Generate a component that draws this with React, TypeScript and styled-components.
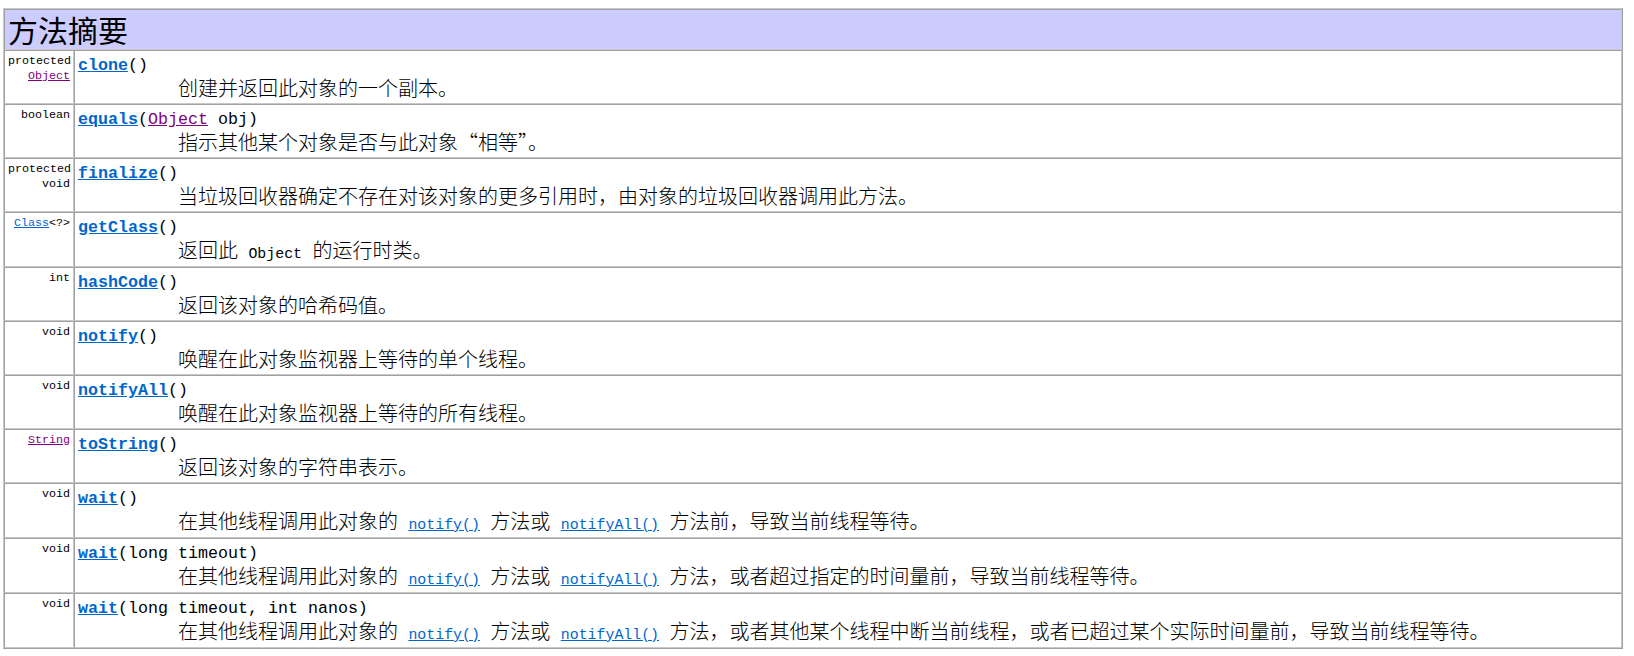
import React from "react";
import styled, { createGlobalStyle } from "styled-components";

const GlobalStyle = createGlobalStyle`
  html, body {
    margin: 0;
    padding: 0;
    background: #ffffff;
  }
  body {
    font-family: "Noto Sans CJK SC", "Liberation Sans", sans-serif;
    color: #000000;
  }
`;

const MONO = `"Liberation Mono", "DejaVu Sans Mono", monospace`;
const CJK = `"Noto Sans CJK SC", "Liberation Sans", sans-serif`;

const Page = styled.div`
  padding: 8px 0 0 3px;
`;

const SummaryTable = styled.div`
  box-sizing: border-box;
  width: 1620px;
  display: grid;
  grid-template-columns: 70px 1fr;
  border: 1px solid;
  border-color: #c8c8c8 #a0a0a0 #a0a0a0 #c8c8c8;
`;

const HeaderCell = styled.div`
  grid-column: 1 / -1;
  background: #ccccff;
  border: 1px solid;
  border-color: #a0a0a0 #c8c8c8 #c8c8c8 #a0a0a0;
  padding: 3px;
  font-family: ${CJK};
  font-size: 30px;
  line-height: 33px;
  font-weight: 400;
  color: #000;
`;

const Cell = styled.div`
  box-sizing: border-box;
  border: 1px solid;
  border-color: #a0a0a0 #c8c8c8 #c8c8c8 #a0a0a0;
  padding: 3px;
  min-width: 0;
`;

const TypeCell = styled(Cell)`
  text-align: right;
  font-family: ${MONO};
  font-size: 11.67px;
  line-height: 15px;
  white-space: nowrap;
`;

const MethodCell = styled(Cell)``;

const Signature = styled.div`
  font-family: ${MONO};
  font-size: 16.67px;
  line-height: 23px;
  white-space: pre;
`;

const Description = styled.div`
  margin-top: -1px;
  padding: 0 0 1px 100px;
  font-family: ${CJK};
  font-size: 20px;
  line-height: 23px;
  font-weight: 300;
  white-space: nowrap;
  word-spacing: 6px;
`;

const MethodLink = styled.a`
  font-weight: 700;
  color: #0066cc;
  text-decoration: underline;
`;

const TypeLink = styled.a<{ $visited?: boolean }>`
  color: ${(p) => (p.$visited ? "#800080" : "#0066cc")};
  text-decoration: underline;
`;

const InlineCode = styled.code`
  font-family: ${MONO};
  font-size: 14.9px;
  line-height: 1;
  word-spacing: 0;
`;

const InlineLink = styled.a`
  font-family: ${MONO};
  font-size: 14.9px;
  line-height: 1;
  color: #0066cc;
  text-decoration: underline;
  word-spacing: 0;
`;

type Row = {
  type: React.ReactNode;
  name: string;
  params: React.ReactNode;
  desc: React.ReactNode;
};

const notifyLinks = (
  <>
    在其他线程调用此对象的 <InlineLink href="#">notify()</InlineLink> 方法或{" "}
    <InlineLink href="#">notifyAll()</InlineLink>{" "}
  </>
);

const rows: Row[] = [
  {
    type: (
      <>
        protected
        <br />
        <TypeLink href="#" $visited>
          Object
        </TypeLink>
      </>
    ),
    name: "clone",
    params: "()",
    desc: "创建并返回此对象的一个副本。",
  },
  {
    type: "boolean",
    name: "equals",
    params: (
      <>
        (<TypeLink href="#" $visited>Object</TypeLink> obj)
      </>
    ),
    desc: "指示其他某个对象是否与此对象“相等”。",
  },
  {
    type: (
      <>
        protected
        <br />
        void
      </>
    ),
    name: "finalize",
    params: "()",
    desc: "当垃圾回收器确定不存在对该对象的更多引用时，由对象的垃圾回收器调用此方法。",
  },
  {
    type: (
      <>
        <TypeLink href="#">Class</TypeLink>&lt;?&gt;
      </>
    ),
    name: "getClass",
    params: "()",
    desc: (
      <>
        返回此 <InlineCode>Object</InlineCode> 的运行时类。
      </>
    ),
  },
  { type: "int", name: "hashCode", params: "()", desc: "返回该对象的哈希码值。" },
  { type: "void", name: "notify", params: "()", desc: "唤醒在此对象监视器上等待的单个线程。" },
  { type: "void", name: "notifyAll", params: "()", desc: "唤醒在此对象监视器上等待的所有线程。" },
  {
    type: (
      <TypeLink href="#" $visited>
        String
      </TypeLink>
    ),
    name: "toString",
    params: "()",
    desc: "返回该对象的字符串表示。",
  },
  {
    type: "void",
    name: "wait",
    params: "()",
    desc: <>{notifyLinks}方法前，导致当前线程等待。</>,
  },
  {
    type: "void",
    name: "wait",
    params: "(long timeout)",
    desc: <>{notifyLinks}方法，或者超过指定的时间量前，导致当前线程等待。</>,
  },
  {
    type: "void",
    name: "wait",
    params: "(long timeout, int nanos)",
    desc: (
      <>
        {notifyLinks}
        方法，或者其他某个线程中断当前线程，或者已超过某个实际时间量前，导致当前线程等待。
      </>
    ),
  },
];

export default function App() {
  return (
    <>
      <GlobalStyle />
      <Page>
        <SummaryTable>
          <HeaderCell>方法摘要</HeaderCell>
          {rows.map((r, i) => (
            <React.Fragment key={i}>
              <TypeCell>{r.type}</TypeCell>
              <MethodCell>
                <Signature>
                  <MethodLink href="#">{r.name}</MethodLink>
                  {r.params}
                </Signature>
                <Description>{r.desc}</Description>
              </MethodCell>
            </React.Fragment>
          ))}
        </SummaryTable>
      </Page>
    </>
  );
}
